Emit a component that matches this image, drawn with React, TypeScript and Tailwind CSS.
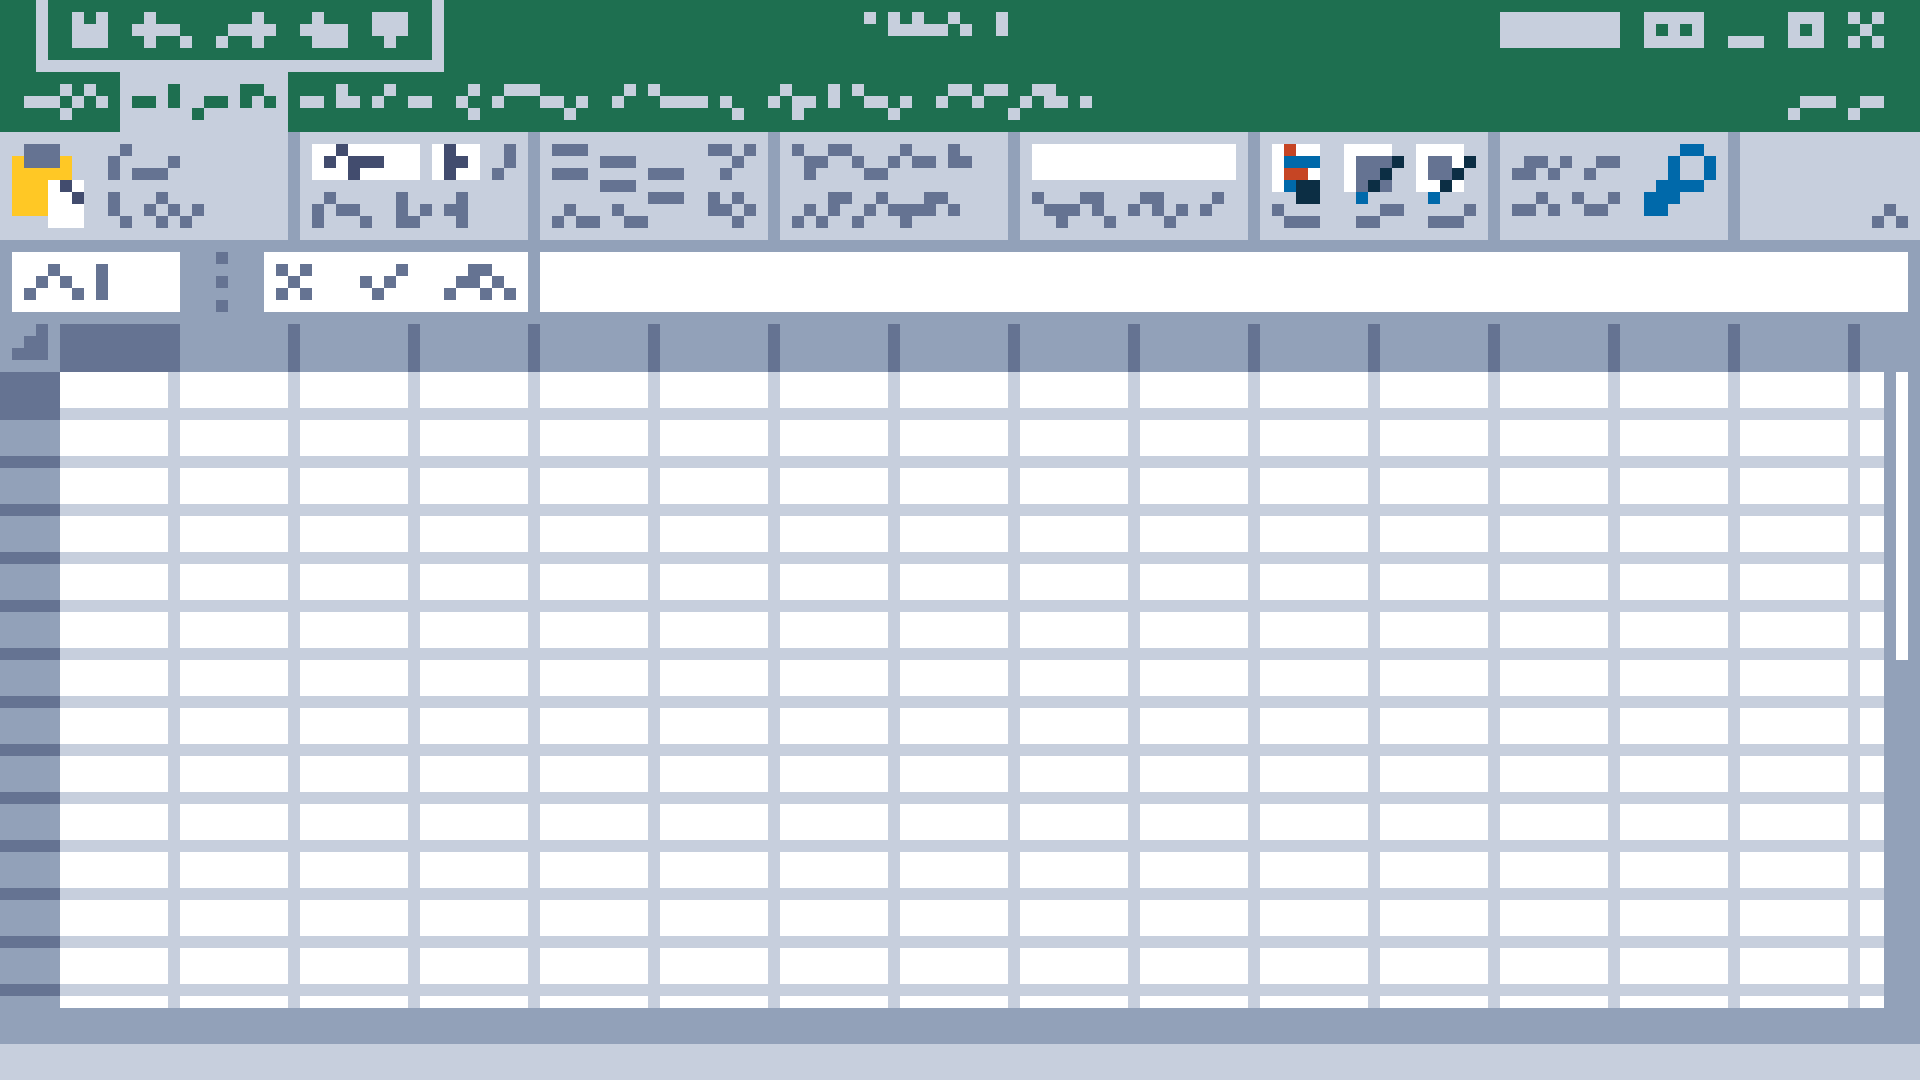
const UNIT = 12;

const PALETTE: Record<string, string> = {
  "#": "currentColor",
  W: "#ffffff",
  D: "#657392",
  N: "#424c6e",
  Y: "#ffc825",
  R: "#c64524",
  B: "#0069aa",
  K: "#0c2e44",
};

type GlyphProps = { art: string[]; className?: string };

/** Draws block art: one character per square, runs of a colour joined into one rect. */
function Glyph({ art, className = "" }: GlyphProps) {
  const cols = Math.max(...art.map((row) => row.length));
  const runs: { x: number; y: number; w: number; fill: string }[] = [];
  art.forEach((row, y) => {
    let x = 0;
    while (x < row.length) {
      const key = row[x];
      let end = x + 1;
      while (end < row.length && row[end] === key) end++;
      if (PALETTE[key]) runs.push({ x, y, w: end - x, fill: PALETTE[key] });
      x = end;
    }
  });
  return (
    <svg
      aria-hidden="true"
      width={cols * UNIT}
      height={art.length * UNIT}
      viewBox={`0 0 ${cols} ${art.length}`}
      shapeRendering="crispEdges"
      className={`block shrink-0 ${className}`}
    >
      {runs.map((r, i) => (
        <rect key={i} x={r.x} y={r.y} width={r.w} height={1} fill={r.fill} />
      ))}
    </svg>
  );
}

function GlyphButton({ label, art, className = "" }: { label: string; art: string[]; className?: string }) {
  return (
    <button type="button" aria-label={label} className={`block shrink-0 ${className}`}>
      <Glyph art={art} />
    </button>
  );
}

const quickAccess = [
  { label: "Save", art: ["#.#", "###", "###"] },
  { label: "Undo", art: [".#...", "####.", ".#..#"] },
  { label: "Redo", art: ["...#.", ".####", "#..#."] },
  { label: "Touch mode", art: [".#..", "####", ".###"] },
  { label: "Customize toolbar", art: ["###", "###", ".#."] },
];

const windowControls = [
  { label: "Account", art: ["##########", "##########", "##########"] },
  { label: "Ribbon display options", art: ["#####", "#.#.#", "#####"] },
  { label: "Minimize", art: ["...", "...", "###"] },
  { label: "Maximize", art: ["###", "#.#", "###"] },
  { label: "Close", art: ["#.#", ".#.", "#.#"] },
];

const tabs = [
  { label: "Insert", art: ["...#...#...", "##.##.#..##", "..........."] },
  { label: "Page layout", art: [".#..###....", "#..#...##.#", ".#.......#."] },
  { label: "Formulas", art: [".#.#.......", "#...####.#.", "..........#"] },
  { label: "Data", art: [".#...#.#....", "#.##.#..##.#", "..#.......#."] },
  { label: "Review", art: [".##.##..##...", "#..#...#.##.#", "......#......"] },
];

const styleButtons = [
  {
    label: "Conditional formatting",
    art: ["WRWW.", "WBBB.", "WRRW.", "WBKK.", "..KK.", "#....", ".###."],
  },
  {
    label: "Format as table",
    art: ["WWWW.", "WDDDK", "WDDK.", "WDKD.", ".B...", "...##", ".##.."],
  },
  {
    label: "Cell styles",
    art: ["WWWW.", "WDDWK", "WDDK.", "WWKW.", ".B...", "....#", ".###."],
  },
];

const alignLines = ["###", "...", "###"];

const COLUMNS = Array.from({ length: 26 }, (_, i) => String.fromCharCode(65 + i));
const ROWS = Array.from({ length: 40 }, (_, i) => i + 1);

function TitleBar() {
  return (
    <div className="flex h-18 items-start">
      <div className="ml-9 flex h-18 shrink-0 items-start gap-6 border-x-12 border-b-12 border-[#c7cfdd] px-6 pt-3">
        {quickAccess.map((b) => (
          <GlyphButton key={b.label} label={b.label} art={b.art} />
        ))}
      </div>
      <h1 aria-label="Workbook 1" className="flex min-w-0 flex-1 justify-center pt-3 pr-18">
        <Glyph art={["#.#.#..#...#", "..#####.#..#"]} />
      </h1>
      <div className="flex shrink-0 items-start gap-6 pt-3 pr-9">
        {windowControls.map((b) => (
          <GlyphButton key={b.label} label={b.label} art={b.art} />
        ))}
      </div>
    </div>
  );
}

function TabBar() {
  return (
    <nav aria-label="Ribbon tabs" className="flex h-15">
      <GlyphButton label="File" art={["...#.#.", "###.#.#", "...#..."]} className="pr-3 pl-6" />
      <GlyphButton
        label="Home"
        art={["...#.....##.", "##.#..##.#.#", ".....#......"]}
        className="bg-[#c7cfdd] px-3 text-[#1e6f50]"
      />
      {tabs.map((t) => (
        <GlyphButton key={t.label} label={t.label} art={t.art} className="px-3" />
      ))}
      <GlyphButton label="Share" art={["........", ".###..##", "#....#.."]} className="mr-9 ml-auto" />
    </nav>
  );
}

const groupClass = "flex items-start shrink-0 border-r-12 border-[#92a1b9] px-3 pt-3";

function Ribbon() {
  return (
    <section aria-label="Ribbon" className="flex h-27 shrink-0 bg-[#c7cfdd] text-[#657392]">
      <div className={`${groupClass} w-75 gap-6`}>
        <GlyphButton
          label="Paste"
          art={[".DDD..", "YDDDY.", "YYYYY.", "YYYWNW", "YYYWWN", "YYYWWW", "...WWW"]}
        />
        <div className="flex flex-col items-start gap-3">
          <GlyphButton label="Cut" art={[".#....", "#....#", "#.###."]} />
          <GlyphButton label="Copy" art={["#...#...", "#..#.#.#", ".#..#.#."]} />
        </div>
      </div>

      <div className={`${groupClass} w-60 flex-col gap-3`}>
        <div className="flex gap-3">
          <GlyphButton label="Font name" art={["WWNWWWWWW", "WNWNNNWWW", "WWWNWWWWW"]} />
          <GlyphButton label="Font size" art={["WNWW", "WNNW", "WNWW"]} />
          <GlyphButton label="Italic" art={[".#", ".#", "#."]} />
        </div>
        <div className="flex gap-3">
          <GlyphButton label="Borders" art={[".#....", "#.##..", "#...#."]} />
          <GlyphButton label="Fill color" art={["#..", "#.#", "##."]} />
          <GlyphButton label="Font color" art={[".#", "##", ".#"]} />
        </div>
      </div>

      <div className={`${groupClass} w-60 justify-between`}>
        <div className="flex flex-col">
          <div className="flex h-15 gap-3">
            <GlyphButton label="Align left" art={alignLines} className="self-start" />
            <GlyphButton label="Align center" art={alignLines} className="self-center" />
            <GlyphButton label="Align right" art={alignLines} className="self-end" />
          </div>
          <Glyph art={[".#...#..", "#.##..##"]} />
        </div>
        <div className="flex flex-col gap-3">
          <GlyphButton label="Wrap text" art={["##.#", "..#.", ".#.."]} />
          <GlyphButton label="Merge cells" art={["#.#.", "##.#", "..#."]} />
        </div>
      </div>

      <div className={`${groupClass} w-60 flex-col gap-3`}>
        <GlyphButton
          label="Number format"
          art={["#..##....#...#.", ".##..#..#.##.##", ".#....##......."]}
        />
        <GlyphButton
          label="Decimal places"
          art={["...##..#...##.", ".#.#..#.####.#", "#.#..#...#...."]}
        />
      </div>

      <div className={`${groupClass} w-60 flex-col gap-3`}>
        <input aria-label="Style" className="h-9 w-full bg-white px-2 outline-none" />
        <Glyph art={["#...##...##....#", ".###.#..#.#.#.#.", "..#...#....#...."]} />
      </div>

      <div className={`${groupClass} w-60 gap-3`}>
        {styleButtons.map((b) => (
          <GlyphButton key={b.label} label={b.label} art={b.art} />
        ))}
      </div>

      <div className={`${groupClass} w-60 justify-between`}>
        <div className="flex flex-col gap-3 pt-3">
          <GlyphButton label="Sum" art={[".##.#..##", "##.#..#.."]} />
          <GlyphButton label="Sort" art={["..#..#..#", "##.#..##."]} />
        </div>
        <GlyphButton
          label="Find"
          art={["...##.", "..#..#", "..#..#", ".####.", "###...", "##...."]}
          className="text-[#0069aa]"
        />
      </div>

      <div className="flex flex-1 items-end justify-end pr-3 pb-3">
        <GlyphButton label="Collapse ribbon" art={[".#.", "#.#"]} />
      </div>
    </section>
  );
}

function FormulaBar() {
  return (
    <div className="flex shrink-0 p-3 text-[#657392]">
      <button type="button" aria-label="Name box, A1" className="h-15 w-42 shrink-0 bg-white p-3">
        <Glyph art={["..#...#", ".#.#..#", "#...#.#"]} />
      </button>
      <Glyph art={["#", ".", "#", ".", "#"]} className="mx-9" />
      <div className="flex h-15 w-66 shrink-0 justify-between bg-white p-3">
        <GlyphButton label="Cancel" art={["#.#.", ".#..", "#.#."]} />
        <GlyphButton label="Enter" art={["...#", "#.#.", ".#.."]} />
        <GlyphButton label="Insert function" art={["..##..", ".##.#.", "#..#.#"]} />
      </div>
      <input aria-label="Formula" className="ml-3 h-15 min-w-0 flex-1 bg-white px-3 outline-none" />
    </div>
  );
}

function Sheet() {
  return (
    <div className="flex min-h-0 flex-1">
      <div className="min-w-0 flex-1 basis-0 overflow-hidden">
        <table aria-label="Worksheet" className="border-separate border-spacing-0">
          <thead>
            <tr>
              <th aria-label="Select all" className="h-12 min-w-15 p-0 px-3 align-top text-[#657392]">
                <Glyph art={["..#", ".##", "###"]} />
              </th>
              {COLUMNS.map((c, i) => (
                <th
                  key={c}
                  scope="col"
                  aria-label={c}
                  className={
                    i === 0
                      ? "h-12 min-w-30 bg-[#657392] p-0"
                      : "h-12 min-w-30 border-r-12 border-[#657392] p-0"
                  }
                />
              ))}
            </tr>
          </thead>
          <tbody>
            {ROWS.map((r, i) => (
              <tr key={r}>
                <th
                  scope="row"
                  aria-label={String(r)}
                  className={
                    i === 0 ? "h-12 bg-[#657392] p-0" : "h-12 border-b-12 border-[#657392] p-0"
                  }
                />
                {COLUMNS.map((c) => (
                  <td key={c} className="h-12 border-r-12 border-b-12 border-[#c7cfdd] bg-white p-0" />
                ))}
              </tr>
            ))}
          </tbody>
        </table>
      </div>
      <div className="w-9 shrink-0 px-3 pt-12">
        <div className="h-72 bg-white" />
      </div>
    </div>
  );
}

export default function App() {
  return (
    <div className="flex h-screen flex-col overflow-hidden bg-[#92a1b9]">
      <header className="shrink-0 bg-[#1e6f50] text-[#c7cfdd] [&_nav_button]:flex [&_nav_button]:items-center">
        <TitleBar />
        <TabBar />
      </header>
      <Ribbon />
      <FormulaBar />
      <Sheet />
      <footer className="mt-9 h-9 shrink-0 bg-[#c7cfdd]" />
    </div>
  );
}
